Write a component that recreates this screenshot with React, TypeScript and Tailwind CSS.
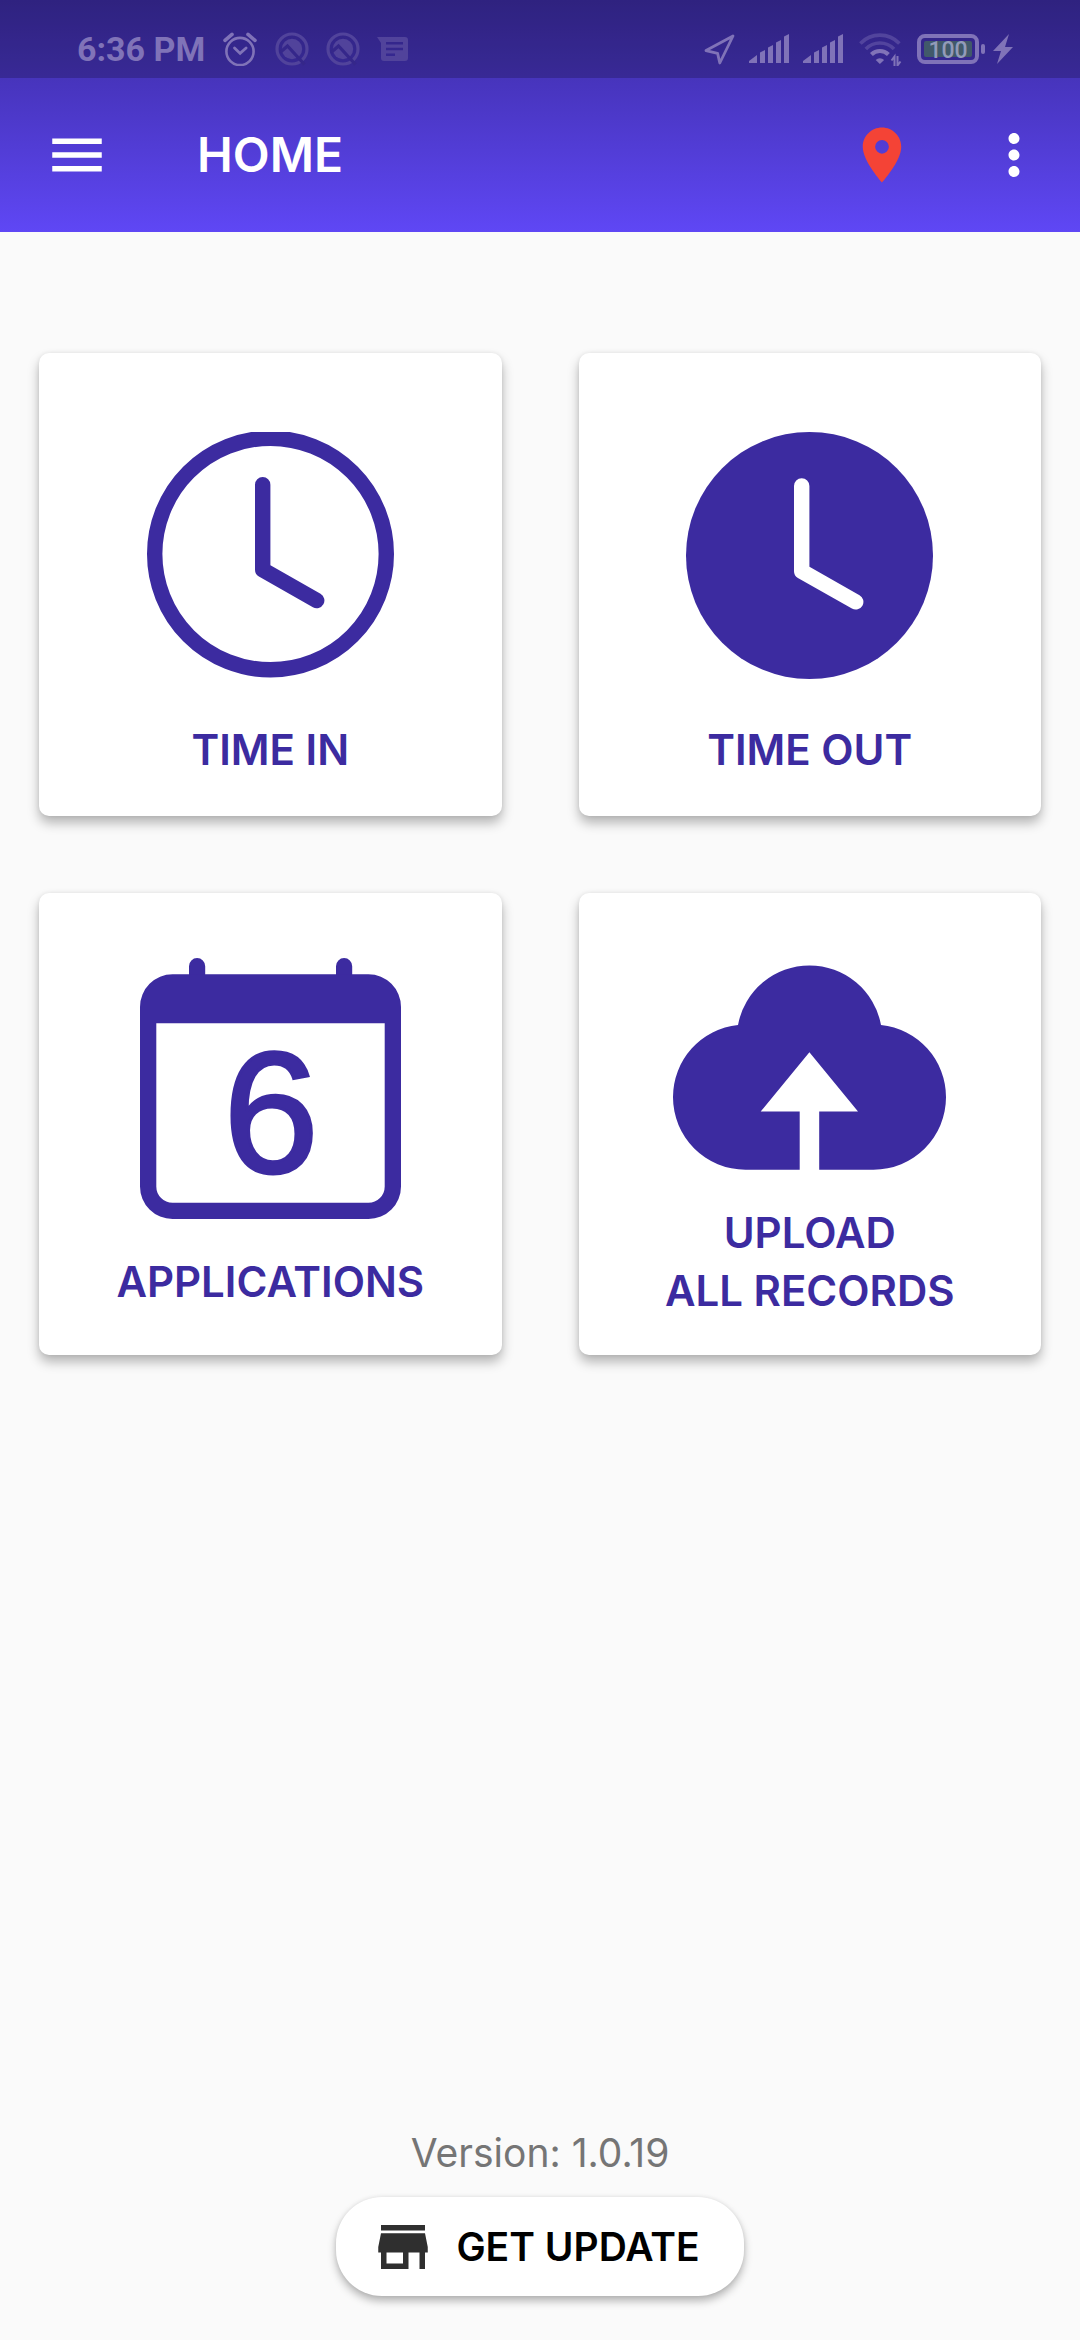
import React from 'react';
import { MdMenu, MdMoreVert, MdPlace, MdStore } from 'react-icons/md';

interface Tile {
  id: string;
  lines: string[];
  icon: React.ReactNode;
  spacing: string;
}

const AlarmIcon: React.FC = () => (
  <svg className="w-[34px] h-[34px]" viewBox="0 0 34 34" fill="none" stroke="currentColor" strokeLinecap="round">
    <circle cx="17" cy="19.5" r="13.6" strokeWidth="2.6" />
    <path d="M11.5 16l5.6 5.4 6-5.4" strokeWidth="2.8" />
    <path d="M2 8.4l7-6M25 2.4l7 6" strokeWidth="3.6" />
  </svg>
);

const SearchBadgeIcon: React.FC = () => (
  <svg className="w-[34px] h-[34px]" viewBox="0 0 34 34" fill="none">
    <circle cx="17" cy="17" r="15" stroke="currentColor" strokeWidth="3.2" />
    <circle cx="17" cy="17" r="10.2" fill="currentColor" />
    {/* ridge line cut out of the disc and the ring */}
    <path d="M5 20.5l7.5-6.5 17 18.5" stroke="#35278a" strokeWidth="3.2" />
  </svg>
);

const ChatIcon: React.FC = () => (
  <svg className="w-[31px] h-[26px]" viewBox="0 0 31 26">
    <path
      fill="currentColor"
      fillRule="evenodd"
      d="M0 1h28a3 3 0 0 1 3 3v18a3 3 0 0 1-3 3H7a3 3 0 0 1-3-3V7zM9 6v2.4h17V6zM9 11.800v2.400h17v-2.400zM9 17.600V20h9v-2.400z"
    />
  </svg>
);

const NavigationIcon: React.FC = () => (
  <svg className="w-[31px] h-[32px]" viewBox="0 0 31 32" fill="none" stroke="currentColor" strokeWidth="2.8" strokeLinejoin="round">
    <path d="M29 3L2 17.6l11.6 2.8 2.2 9.6z" />
  </svg>
);

const SignalIcon: React.FC = () => (
  <svg className="w-[40px] h-[30px]" viewBox="0 0 40 30" fill="currentColor">
    <path d="M0 29v-2l8-6v8zM11 29V18.5l5-2.5v13zM19 29V13.5l5-2.5v18zM27 29V8.5l5-2.5v23zM35 29V2.5L40 0v29z" />
  </svg>
);

const WifiIcon: React.FC = () => (
  <svg className="w-[46px] h-[34px]" viewBox="0 0 46 34" fill="none" stroke="currentColor">
    <path d="M3.4 11.5a27 27 0 0 1 39 0" strokeWidth="3.6" opacity="0.4" />
    <path d="M8.8 17a19.5 19.5 0 0 1 28.200 0" strokeWidth="3.6" opacity="0.4" />
    <path d="M14.4 22.5a12 12 0 0 1 17 0" strokeWidth="4" />
    <path d="M22.9 32l-4.200-4a6 6 0 0 1 8.400 0z" fill="currentColor" stroke="none" />
    <path d="M37.5 34v-9.500l-3 4M40.500 24v9.500l3-4" strokeWidth="2" />
  </svg>
);

const BatteryIcon: React.FC = () => (
  <svg className="w-[68px] h-[30px]" viewBox="0 0 68 30">
    <rect x="2" y="2" width="58" height="26" rx="6" fill="none" stroke="currentColor" strokeWidth="4" />
    <rect x="7" y="7" width="48" height="16" rx="2" fill="#41596a" />
    <rect x="64" y="10" width="4" height="10" rx="2" fill="currentColor" />
    <text x="31" y="23.5" textAnchor="middle" className="font-['Roboto',sans-serif] text-[23px] font-medium" fill="#929bb9">
      100
    </text>
  </svg>
);

const BoltIcon: React.FC = () => (
  <svg className="w-[20px] h-[30px]" viewBox="0 0 20 30" fill="currentColor">
    <path d="M16 0L0 17h8L4 30l16-17h-8z" />
  </svg>
);

const ClockIcon: React.FC = () => (
  <svg className="w-[247px] h-[247px]" viewBox="0 0 247 247" fill="none" stroke="currentColor" strokeWidth="15.4">
    <circle cx="123.5" cy="122" r="115.8" />
    <path d="M115.7 52.8v85l54 30.7" strokeLinecap="round" strokeLinejoin="round" />
  </svg>
);

const ClockFillIcon: React.FC = () => (
  <svg className="w-[247px] h-[247px]" viewBox="0 0 247 247">
    <circle cx="123.5" cy="123.5" r="123.5" fill="currentColor" />
    <path
      d="M115.7 54v85.2l54 30.7"
      fill="none"
      stroke="white"
      strokeWidth="15.4"
      strokeLinecap="round"
      strokeLinejoin="round"
    />
  </svg>
);

const CalendarIcon: React.FC<{ day: number }> = ({ day }) => (
  <svg className="w-[261px] h-[261px]" viewBox="0 0 261 261" fill="currentColor">
    <path d="M49 20V8.2a8.1 8.1 0 0 1 16.2 0V20zM196 20V8.2a8.1 8.1 0 0 1 16.2 0V20z" />
    <path
      fillRule="evenodd"
      d="M32.6 16.3h195.8A32.6 32.6 0 0 1 261 48.9v179.5a32.6 32.6 0 0 1-32.6 32.6H32.6A32.6 32.6 0 0 1 0 228.4V48.9a32.6 32.6 0 0 1 32.6-32.6zM16.300 65.300v163.100a16.300 16.300 0 0 0 16.300 16.300h195.800a16.300 16.300 0 0 0 16.300-16.300V65.300z"
    />
    <text
      x="131"
      y="214"
      textAnchor="middle"
      className="font-['Liberation_Sans',sans-serif] text-[172px]"
      stroke="currentColor"
      strokeWidth="3"
    >
      {day}
    </text>
  </svg>
);

const CloudUploadIcon: React.FC = () => (
  <svg className="w-[273px] h-[205px]" viewBox="0 0 273 205" fill="currentColor">
    <path d="M72.5 204.7A72.5 72.5 0 0 1 0 132.200A72.5 72.5 0 0 1 65 60a72.7 72.7 0 0 1 143 0a72.5 72.5 0 0 1 65 72.200a72.5 72.5 0 0 1-72.5 72.500H146.200V146.500H185L136.400 87.300 87.700 146.500h39v58.200z" />
  </svg>
);

const tiles: Tile[] = [
  { id: 'time-in', lines: ['TIME IN'], icon: <ClockIcon />, spacing: 'pt-[79px] gap-[42px]' },
  { id: 'time-out', lines: ['TIME OUT'], icon: <ClockFillIcon />, spacing: 'pt-[79px] gap-[42px]' },
  { id: 'applications', lines: ['APPLICATIONS'], icon: <CalendarIcon day={6} />, spacing: 'pt-[65px] gap-[34px]' },
  { id: 'upload', lines: ['UPLOAD', 'ALL RECORDS'], icon: <CloudUploadIcon />, spacing: 'pt-[72px] gap-[34px]' },
];

const StatusBar: React.FC = () => (
  <div className="flex h-[78px] items-center justify-between bg-black/20 pt-5 pr-[67px] pl-[77px] text-[#8073b8]">
    <div className="flex items-center gap-[18px]">
      <span className="font-['Roboto',sans-serif] text-[34px] leading-[40px] font-bold">6:36 PM</span>
      <AlarmIcon />
      <div className="flex items-center gap-[17px] text-[#51439b]">
        <SearchBadgeIcon />
        <SearchBadgeIcon />
        <ChatIcon />
      </div>
    </div>
    <div className="flex items-center gap-[14px]">
      <NavigationIcon />
      <SignalIcon />
      <SignalIcon />
      <WifiIcon />
      <div className="flex items-center gap-2">
        <BatteryIcon />
        <BoltIcon />
      </div>
    </div>
  </div>
);

const App: React.FC = () => {
  return (
    <div className="flex min-h-screen flex-col bg-[#fafafa] font-['Inter',sans-serif]">
      <header className="bg-linear-to-b from-[#3b2ba0] to-[#5f47f5] text-white">
        <StatusBar />
        <div className="flex h-[154px] items-center pr-[33px] pl-[44px]">
          <button type="button" aria-label="Menu">
            <MdMenu className="size-[66px]" />
          </button>
          <h1 className="ml-[87px] text-[48px] leading-[58px] font-semibold">HOME</h1>
          <div className="ml-auto flex items-center gap-[66px]">
            <button type="button" aria-label="Location" className="text-[#f44336]">
              <MdPlace className="size-[66px]" />
            </button>
            <button type="button" aria-label="More options">
              <MdMoreVert className="size-[66px]" />
            </button>
          </div>
        </div>
      </header>

      <main className="grid grid-cols-2 gap-[77px] px-[39px] pt-[121px]">
        {tiles.map(tile => (
          <button
            key={tile.id}
            type="button"
            className={`flex aspect-square flex-col items-center rounded-[10px] bg-white text-[#3c2ba0] shadow-[0_7px_12px_rgba(0,0,0,0.28),0_0_4px_rgba(0,0,0,0.08)] ${tile.spacing}`}
          >
            {tile.icon}
            <span className="text-[42px] leading-[58px] font-semibold">
              {tile.lines.map(line => (
                <span key={line} className="block">{line}</span>
              ))}
            </span>
          </button>
        ))}
      </main>

      <footer className="mt-auto flex flex-col items-center gap-[15px] pb-[44px]">
        <p className="text-[39px] leading-[58px] text-[#757575]">Version: 1.0.19</p>
        <button
          type="button"
          className="flex h-[99px] items-center gap-[20px] rounded-[46px] bg-white pr-[44px] pl-[34px] text-black shadow-[0_5px_9px_rgba(0,0,0,0.28),0_0_4px_rgba(0,0,0,0.08)]"
        >
          <MdStore className="size-[66px] text-[#2f2f2f]" />
          <span className="text-[39px] leading-[58px] font-semibold">GET UPDATE</span>
        </button>
      </footer>
    </div>
  );
};

export default App;
